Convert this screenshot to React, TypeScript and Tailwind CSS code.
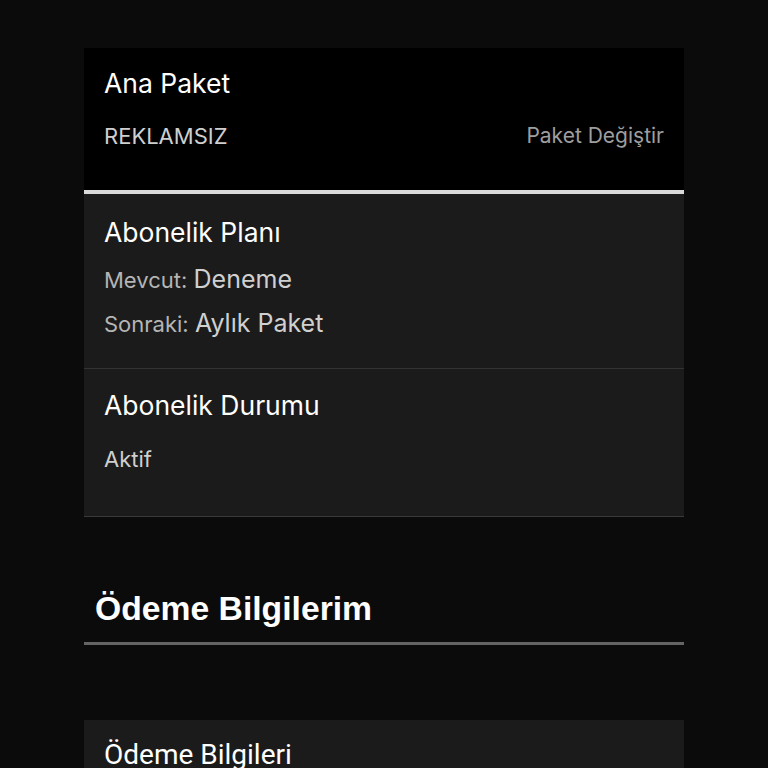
import React from "react";

export default function App() {
  return (
    <div className="h-[768px] overflow-hidden w-full bg-[#0b0b0b] pt-[48px]" style={{ fontFamily: "Inter, 'Noto Sans', sans-serif" }}>
      <div className="mx-auto w-[600px]">
        <div className="bg-black px-[20px] pt-[17px] pb-[40px] border-b-[4px] border-[#d9d9d9]">
          <div className="text-[26.5px] leading-[36px] text-white">Ana Paket</div>
          <div className="mt-[21px] flex items-center justify-between">
            <span className="text-[22px] leading-[28px] text-[#cfcfcf]">REKLAMSIZ</span>
            <span className="text-[21px] leading-[28px] text-[#9e9e9e]">Paket Değiştir</span>
          </div>
        </div>
        <div className="bg-[#1b1b1b] px-[20px] pt-[20px] pb-[28px] border-b border-[#333333]">
          <div className="text-[26.5px] leading-[36px] text-white">Abonelik Planı</div>
          <div className="mt-[12px] h-[34px] leading-[34px] whitespace-nowrap">
            <span className="text-[22px] text-[#b5b5b5]">Mevcut: </span>
            <span className="text-[25px] text-[#d0d0d0]">Deneme</span>
          </div>
          <div className="mt-[10px] h-[34px] leading-[34px] whitespace-nowrap">
            <span className="text-[22px] text-[#b5b5b5]">Sonraki: </span>
            <span className="text-[25px] text-[#d0d0d0]">Aylık Paket</span>
          </div>
        </div>
        <div className="bg-[#1b1b1b] px-[20px] pt-[18px] pb-[43px] border-b border-[#3a3a3a]">
          <div className="text-[26.5px] leading-[36px] text-white">Abonelik Durumu</div>
          <div className="mt-[22px] text-[22px] leading-[28px] text-[#cfcfcf]">Aktif</div>
        </div>
        <div className="mt-[71px] px-[11px] pb-[14px] border-b-[3px] border-[#646464]">
          <div className="text-[33.7px] leading-[40px] font-bold text-white" style={{ fontFamily: "'Liberation Sans', Arial, sans-serif" }}>Ödeme Bilgilerim</div>
        </div>
        <div className="mt-[75px] bg-[#1b1b1b] px-[20px] pt-[17px] pb-[40px]">
          <div className="text-[28px] leading-[36px] text-white" style={{ fontFamily: "Roboto, sans-serif" }}>Ödeme Bilgileri</div>
        </div>
      </div>
    </div>
  );
}
